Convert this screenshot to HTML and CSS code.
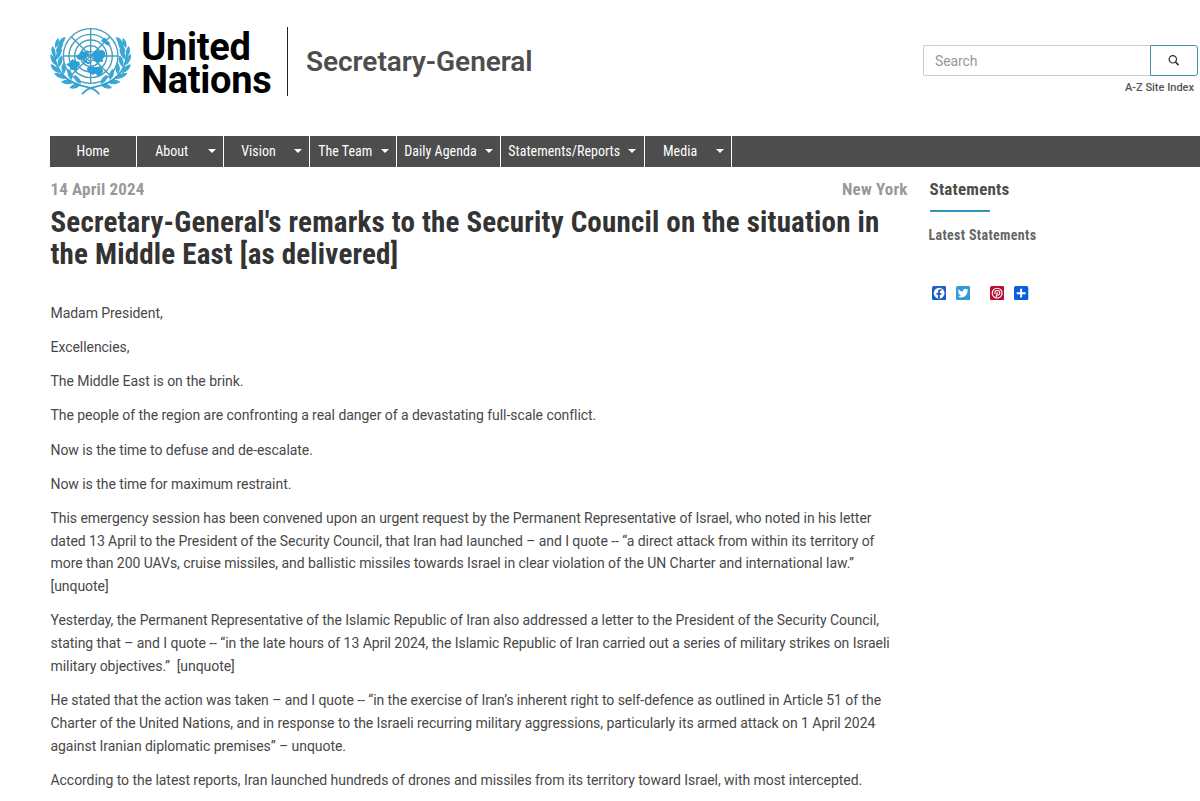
FILE: index.html
```html
<!DOCTYPE html>
<html lang="en">
<head>
<meta charset="utf-8">
<title>Secretary-General's remarks to the Security Council</title>
<link rel="stylesheet" href="styles.css">
</head>
<body>
<header class="header">
  <a class="brand">
    <svg class="emblem" viewBox="30 20 245 210" fill="none" stroke="#2f9fcb">
      <g stroke="#4a9fbd" stroke-width="4.2">
        <circle cx="152" cy="107" r="82"/><circle cx="152" cy="107" r="65"/><circle cx="152" cy="107" r="48"/><circle cx="152" cy="107" r="31"/><circle cx="152" cy="107" r="14"/>
        <path d="M152 25V189M70 107H234M94 49L210 165M210 49L94 165"/>
      </g>
      <g fill="#2b9fd6" stroke="none">
        <path d="M118 99l8-7 10 2 5-4 8 5-5 7 4 5-9 3-3 9 8 5 8-1 2 6-10 3-11-6-9-10-8-5z"/>
        <path d="M160 96l8-8 10 3 9-3 8 8 1 12-8 7 1 10-10-1-7 5-8-7-6-2 3-9-5-6z"/>
        <path d="M78 132l10-5 9-11 10 7 11 1 2 9-7 6-4 13-9-4-8 2-3-10z"/>
        <path d="M142 141l12-4 14 4 12-3 10 13-6 12-9 7-8-10-10 3-11-6-5-8z"/>
        <path d="M187 56l9-4 5 9 9 6-4 9-8-3-6-7-9-2z"/>
        <path d="M108 106l9-4 7 10-4 8-8-5z"/>
      </g>
      <g fill="#3aa8d8" stroke="#3aa8d8" stroke-width="4" stroke-linejoin="round">
        <g id="branch">
          <path d="M74 52q-16 5-18 24 14-6 18-24zM54 56q-10 10-7 24 10-9 7-24zM68 69q-18 7-18 26 14-7 18-26zM38 80q-6 14 5 28 5-15-5-28zM64 87q-17 9-14 28 13-10 14-28zM33 104q-1 17 13 28 1-17-13-28zM65 108q-14 11-8 29 12-12 8-29zM34 134q4 16 22 22-5-17-22-22zM72 129q-11 13-1 30 9-16 1-30zM45 160q9 13 29 14-10-16-29-14zM86 148q-6 16 8 28 4-17-8-28zM66 185q15 9 32 1-16-12-32-1zM104 166q0 16 17 22-2-15-17-22zM91 202q17 4 29-8-18-5-29 8z"/>
        </g>
        <use href="#branch" transform="translate(304 0) scale(-1 1)"/>
      </g>
      <g stroke-width="5">
        <path d="M44 102Q49 183 145 201Q165 205 178 222M260 102Q255 183 159 201Q139 205 126 222"/>
      </g>
    </svg>
    <span class="wordmark">United<br>Nations</span>
  </a>
  <div class="site-name">Secretary-General</div>
  <div class="tools">
    <div class="search">
      <div class="search-input">Search</div>
      <div class="search-button">
        <svg width="12" height="12" viewBox="0 0 12 12" fill="none" stroke="#333"><circle cx="4.8" cy="4.3" r="3.7" stroke-width="1.2"/><path d="M7.5 7L10.6 10.1" stroke-width="1.7"/></svg>
      </div>
    </div>
    <a class="site-index">A-Z Site Index</a>
  </div>
</header>
<nav class="nav">
  <a class="item plain">Home</a>
  <a class="item"><span>About</span><i class="caret"></i></a>
  <a class="item"><span>Vision</span><i class="caret"></i></a>
  <a class="item"><span>The Team</span><i class="caret"></i></a>
  <a class="item agenda"><span>Daily Agenda</span><i class="caret"></i></a>
  <a class="item reports"><span>Statements/Reports</span><i class="caret"></i></a>
  <a class="item"><span>Media</span><i class="caret"></i></a>
</nav>
<main class="content">
  <article class="article">
    <div class="meta"><span>14 April 2024</span><span>New York</span></div>
    <h1 class="title">Secretary-General's remarks to the Security Council on the situation in<br>the Middle East [as delivered]</h1>
    <div class="body">
      <p>Madam President,</p>
      <p>Excellencies,</p>
      <p>The Middle East is on the brink.</p>
      <p>The people of the region are confronting a real danger of a devastating full-scale conflict.</p>
      <p>Now is the time to defuse and de-escalate.</p>
      <p>Now is the time for maximum restraint.</p>
      <p>This emergency session has been convened upon an urgent request by the Permanent Representative of Israel, who noted in his letter<br>dated 13 April to the President of the Security Council, that Iran had launched – and I quote -- “a direct attack from within its territory of<br>more than 200 UAVs, cruise missiles, and ballistic missiles towards Israel in clear violation of the UN Charter and international law.”<br>[unquote]</p>
      <p>Yesterday, the Permanent Representative of the Islamic Republic of Iran also addressed a letter to the President of the Security Council,<br>stating that – and I quote -- “in the late hours of 13 April 2024, the Islamic Republic of Iran carried out a series of military strikes on Israeli<br>military objectives.”&nbsp; [unquote]</p>
      <p>He stated that the action was taken – and I quote -- “in the exercise of Iran’s inherent right to self-defence as outlined in Article 51 of the<br>Charter of the United Nations, and in response to the Israeli recurring military aggressions, particularly its armed attack on 1 April 2024<br>against Iranian diplomatic premises” – unquote.</p>
      <p>According to the latest reports, Iran launched hundreds of drones and missiles from its territory toward Israel, with most intercepted.</p>
    </div>
  </article>
  <aside class="sidebar">
    <h2 class="side-title">Statements</h2>
    <a class="latest">Latest Statements</a>
    <div class="share">
      <svg viewBox="0 0 32 32"><rect width="32" height="32" rx="4" fill="#1c5fc4"/><circle cx="16" cy="16" r="12" fill="#fff"/><path fill="#1c5fc4" d="M13.5 28v-8.500h-3.500v-4h3.500v-3c0-3.800 2-5.500 5-5.500 1.400 0 2.800.3 2.800.3v3.300h-1.700c-1.500 0-2 1-2 2v2.900h3.600l-.6 4h-3v8.500z"/></svg>
      <svg viewBox="0 0 32 32"><rect width="32" height="32" rx="4" fill="#2f9bd8"/><path fill="#fff" d="M28 8.560a9.900 9.900 0 0 1-2.830.78 4.940 4.940 0 0 0 2.170-2.730 9.900 9.900 0 0 1-3.130 1.200 4.920 4.920 0 0 0-8.390 4.490A13.980 13.980 0 0 1 5.670 7.150a4.930 4.930 0 0 0 1.520 6.570 4.900 4.900 0 0 1-2.230-.61v.06a4.930 4.930 0 0 0 3.950 4.830 4.900 4.900 0 0 1-2.220.08 4.930 4.930 0 0 0 4.600 3.420A9.900 9.900 0 0 1 4 23.540a13.940 13.940 0 0 0 7.550 2.210c9.060 0 14.010-7.500 14.010-14.010l-.02-.64A10 10 0 0 0 28 8.560z"/></svg>
      <svg class="pin" viewBox="0 0 32 32"><rect width="32" height="32" rx="4" fill="#b80f32"/><circle cx="16" cy="16" r="11" fill="none" stroke="#fff" stroke-width="2.500"/><path d="M12 18C9.500 14 11.500 10 16 10s6.500 3.500 5.500 7-5.500 4-6.500 1.500M16.500 13.500L13.500 26" fill="none" stroke="#fff" stroke-width="2.500"/></svg>
      <svg viewBox="0 0 32 32"><rect width="32" height="32" rx="4" fill="#0a5fe0"/><path d="M16 6V26M6 16H26" stroke="#fff" stroke-width="4.500"/></svg>
    </div>
  </aside>
</main>
</body>
</html>
```

FILE: styles.css
```css
* { box-sizing: border-box; }
body {
  margin: 0;
  width: 1200px;
  height: 801px;
  overflow: hidden;
  background: #fff;
  font-family: Roboto, "Liberation Sans", sans-serif;
  color: #484848;
}
.header {
  height: 136px;
  padding: 27px 2px 0 50px;
  display: flex;
  align-items: flex-start;
}
.brand {
  width: 238px;
  height: 69px;
  display: flex;
  border-right: 1px solid #222;
}
.emblem { width: 81.700px; height: 70px; flex: none; }
.wordmark {
  margin-left: 9.500px;
  margin-top: 4px;
  font-size: 38px;
  line-height: 33px;
  font-weight: 700;
  letter-spacing: -.3px;
  color: #000;
}
.site-name {
  margin: 18px 0 0 18px;
  font-size: 28px;
  line-height: 34px;
  font-weight: 600;
  letter-spacing: -.05px;
  color: #4d4d4d;
}
.tools {
  margin-left: auto;
  margin-top: 18px;
  width: 275px;
  display: flex;
  flex-direction: column;
}
.search { display: flex; height: 31px; }
.search-input {
  flex: 1;
  border: 1px solid #ccc;
  border-right: 0;
  border-radius: 2px 0 0 2px;
  padding-left: 11px;
  font-size: 14px;
  line-height: 30px;
  letter-spacing: -.1px;
  color: #999;
}
.search-button {
  width: 48px;
  border: 1px solid #3f93b5;
  border-radius: 0 3px 3px 0;
  display: flex;
  align-items: center;
  justify-content: center;
}
.site-index {
  align-self: flex-end;
  margin: 5px 4px 0 0;
  font-size: 11px;
  line-height: 14px;
  font-weight: 500;
  letter-spacing: 0;
  color: #555;
}
.nav, .meta, .title, .side-title, .latest {
  font-family: "Roboto Condensed", Roboto, sans-serif;
  font-stretch: 75%;
}
.nav {
  margin-left: 50px;
  height: 31px;
  background: #4d4d4d;
  display: flex;
}
.item {
  width: 86.800px;
  padding: 0 7px 1px;
  border-right: 1px solid #fff;
  display: flex;
  align-items: center;
  color: #fff;
  font-size: 14px;
  letter-spacing: .03px;
  white-space: nowrap;
}
.item span { flex: 1; text-align: center; }
.plain { justify-content: center; }
.agenda { width: 104px; padding-right: 8px; }
.reports { width: 144px; padding-right: 8px; }
.caret {
  margin-left: 8px;
  border: 4px solid transparent;
  border-top-color: #fff;
  border-bottom: 0;
}
.content { display: flex; padding-left: 50.500px; }
.article { width: 857px; }
.meta {
  display: flex;
  justify-content: space-between;
  margin-top: 11px;
  font-size: 17px;
  line-height: 22px;
  font-weight: 700;
  letter-spacing: .17px;
  color: #999;
}
.title {
  margin: 6px 0 0;
  font-size: 29px;
  line-height: 32px;
  font-weight: 700;
  letter-spacing: .19px;
  color: #333;
  white-space: nowrap;
}
.body {
  margin-top: 32px;
  font-size: 14px;
  line-height: 22.770px;
  letter-spacing: -.053px;
  white-space: nowrap;
}
.body p { margin: 0 0 11.400px; }
.sidebar { margin-left: 22px; padding-top: 11px; }
.side-title {
  margin: 0;
  font-size: 17px;
  line-height: 22px;
  font-weight: 700;
  letter-spacing: .22px;
  color: #4d4d4d;
}
.side-title::after {
  content: "";
  display: block;
  width: 60px;
  height: 2px;
  margin-top: 10px;
  background: #2f95bd;
}
.latest {
  display: block;
  margin: 13px 0 0 -1px;
  font-size: 14px;
  line-height: 20px;
  font-weight: 700;
  letter-spacing: .33px;
  color: #666;
}
.share { display: flex; gap: 10px; margin: 41px 0 0 2px; }
.share svg { width: 14.300px; height: 14.300px; }
.share .pin { margin-left: 10px; }
```
